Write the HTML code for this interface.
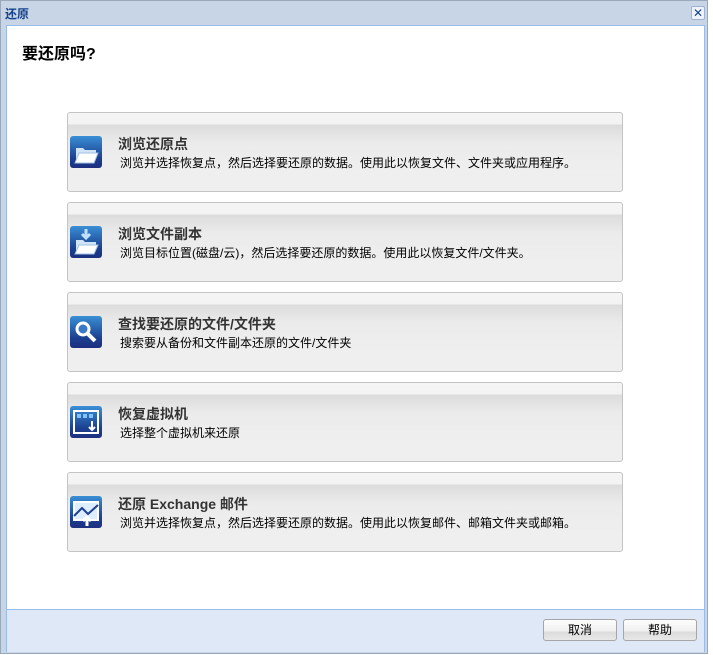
<!DOCTYPE html>
<html><head><meta charset="utf-8"><style>
body{margin:0;width:713px;height:655px;background:#fff;font-family:"Liberation Sans","Noto Sans CJK SC",sans-serif;position:relative;overflow:hidden}
.win{position:absolute;left:0;top:0;width:708px;height:654px;background:#c7d5e6;border:1px solid #99a8bb;box-sizing:border-box}
.title{position:absolute;left:5px;top:5px;font-size:12px;font-weight:bold;color:#15428b}
.close{position:absolute;left:691px;top:6px;width:14px;height:14px;background:#eef3fb;border:1px solid #9fb3d0;border-radius:2px;box-sizing:border-box;color:#15428b;font-size:12px;line-height:12px;text-align:center}
.content{position:absolute;left:6px;top:25px;width:699px;height:585px;background:#fff;border:1px solid #99bbe8;box-sizing:border-box}
.footer{position:absolute;left:6px;top:610px;width:699px;height:42px;background:#dfe8f6;border-left:1px solid #99bbe8;border-right:1px solid #99bbe8;box-sizing:border-box}
h1{position:absolute;left:22px;top:40px;margin:0;font-size:16px;font-weight:bold;color:#000}
.card{position:absolute;left:67px;width:556px;height:80px;border:1px solid #c4c4c4;border-radius:3px;box-sizing:border-box;background:linear-gradient(#f5f5f5 0,#f3f3f3 11px,#dcdcdc 12px,#ebebeb 30px,#efefef 60px,#efefef 100%)}
.card .ic{position:absolute;left:2px;top:23px;width:32px;height:32px;border-radius:3px;background:linear-gradient(#3a8fd6,#1b3f8f 70%,#1d2f80)}
.card .t{position:absolute;left:50px;top:21px;font-size:14px;font-weight:bold;color:#333}
.card .d{position:absolute;left:52px;top:41px;font-size:12px;color:#000}
.btn{position:absolute;top:619px;width:74px;height:22px;border:1px solid #a6a6a6;border-radius:3px;box-sizing:border-box;background:linear-gradient(#fdfdfd,#f0f0f0 55%,#dcdcdc 60%,#e8e8e8);font-size:12px;text-align:center;line-height:20px;color:#000}
</style></head><body>
<div class="win"></div>
<div class="title">还原</div>
<div class="close">✕</div>
<div class="content"></div>
<div class="footer"></div>
<h1>要还原吗?</h1>

<div class="card" style="top:112px"><div class="ic"><svg width="32" height="32"><path d="M6 12h7l2 2h11v3H9l-3 10z" fill="#cfe4f7"/><path d="M9 17h19l-4 10H5z" fill="#fff" stroke="#9fc1e6"/></svg></div><div class="t">浏览还原点</div><div class="d">浏览并选择恢复点，然后选择要还原的数据。使用此以恢复文件、文件夹或应用程序。</div></div>

<div class="card" style="top:202px"><div class="ic"><svg width="32" height="32"><path d="M16 3v8M12 8l4 4 4-4" stroke="#bfe0ff" stroke-width="3" fill="none"/><path d="M6 14h7l2 2h11v3H9l-3 9z" fill="#cfe4f7"/><path d="M9 19h19l-4 9H5z" fill="#fff" stroke="#9fc1e6"/></svg></div><div class="t">浏览文件副本</div><div class="d">浏览目标位置(磁盘/云)，然后选择要还原的数据。使用此以恢复文件/文件夹。</div></div>

<div class="card" style="top:292px"><div class="ic"><svg width="32" height="32"><circle cx="13" cy="13" r="6" fill="#3a78c8" stroke="#fff" stroke-width="3"/><path d="M17 17l8 8" stroke="#fff" stroke-width="4"/></svg></div><div class="t">查找要还原的文件/文件夹</div><div class="d">搜索要从备份和文件副本还原的文件/文件夹</div></div>

<div class="card" style="top:382px"><div class="ic"><svg width="32" height="32"><rect x="4" y="5" width="24" height="22" fill="none" stroke="#fff" stroke-width="2"/><rect x="7" y="8" width="4" height="4" fill="#7fc4ff"/><rect x="13" y="8" width="4" height="4" fill="#7fc4ff"/><rect x="19" y="8" width="4" height="4" fill="#7fc4ff"/><path d="M22 15v9M19 21l3 3 3-3" stroke="#fff" stroke-width="2" fill="none"/></svg></div><div class="t">恢复虚拟机</div><div class="d">选择整个虚拟机来还原</div></div>

<div class="card" style="top:472px"><div class="ic"><svg width="32" height="32"><rect x="4" y="6" width="24" height="18" fill="#dceeff" stroke="#fff" stroke-width="2"/><path d="M4 20l8-8 6 6 10-9" stroke="#1d3f8f" stroke-width="2" fill="none"/><path d="M17 30v-8M13 25l4-4 4 4" stroke="#fff" stroke-width="3" fill="none"/></svg></div><div class="t">还原 Exchange 邮件</div><div class="d">浏览并选择恢复点，然后选择要还原的数据。使用此以恢复邮件、邮箱文件夹或邮箱。</div></div>

<div class="btn" style="left:543px">取消</div>
<div class="btn" style="left:623px">帮助</div>
</body></html>
